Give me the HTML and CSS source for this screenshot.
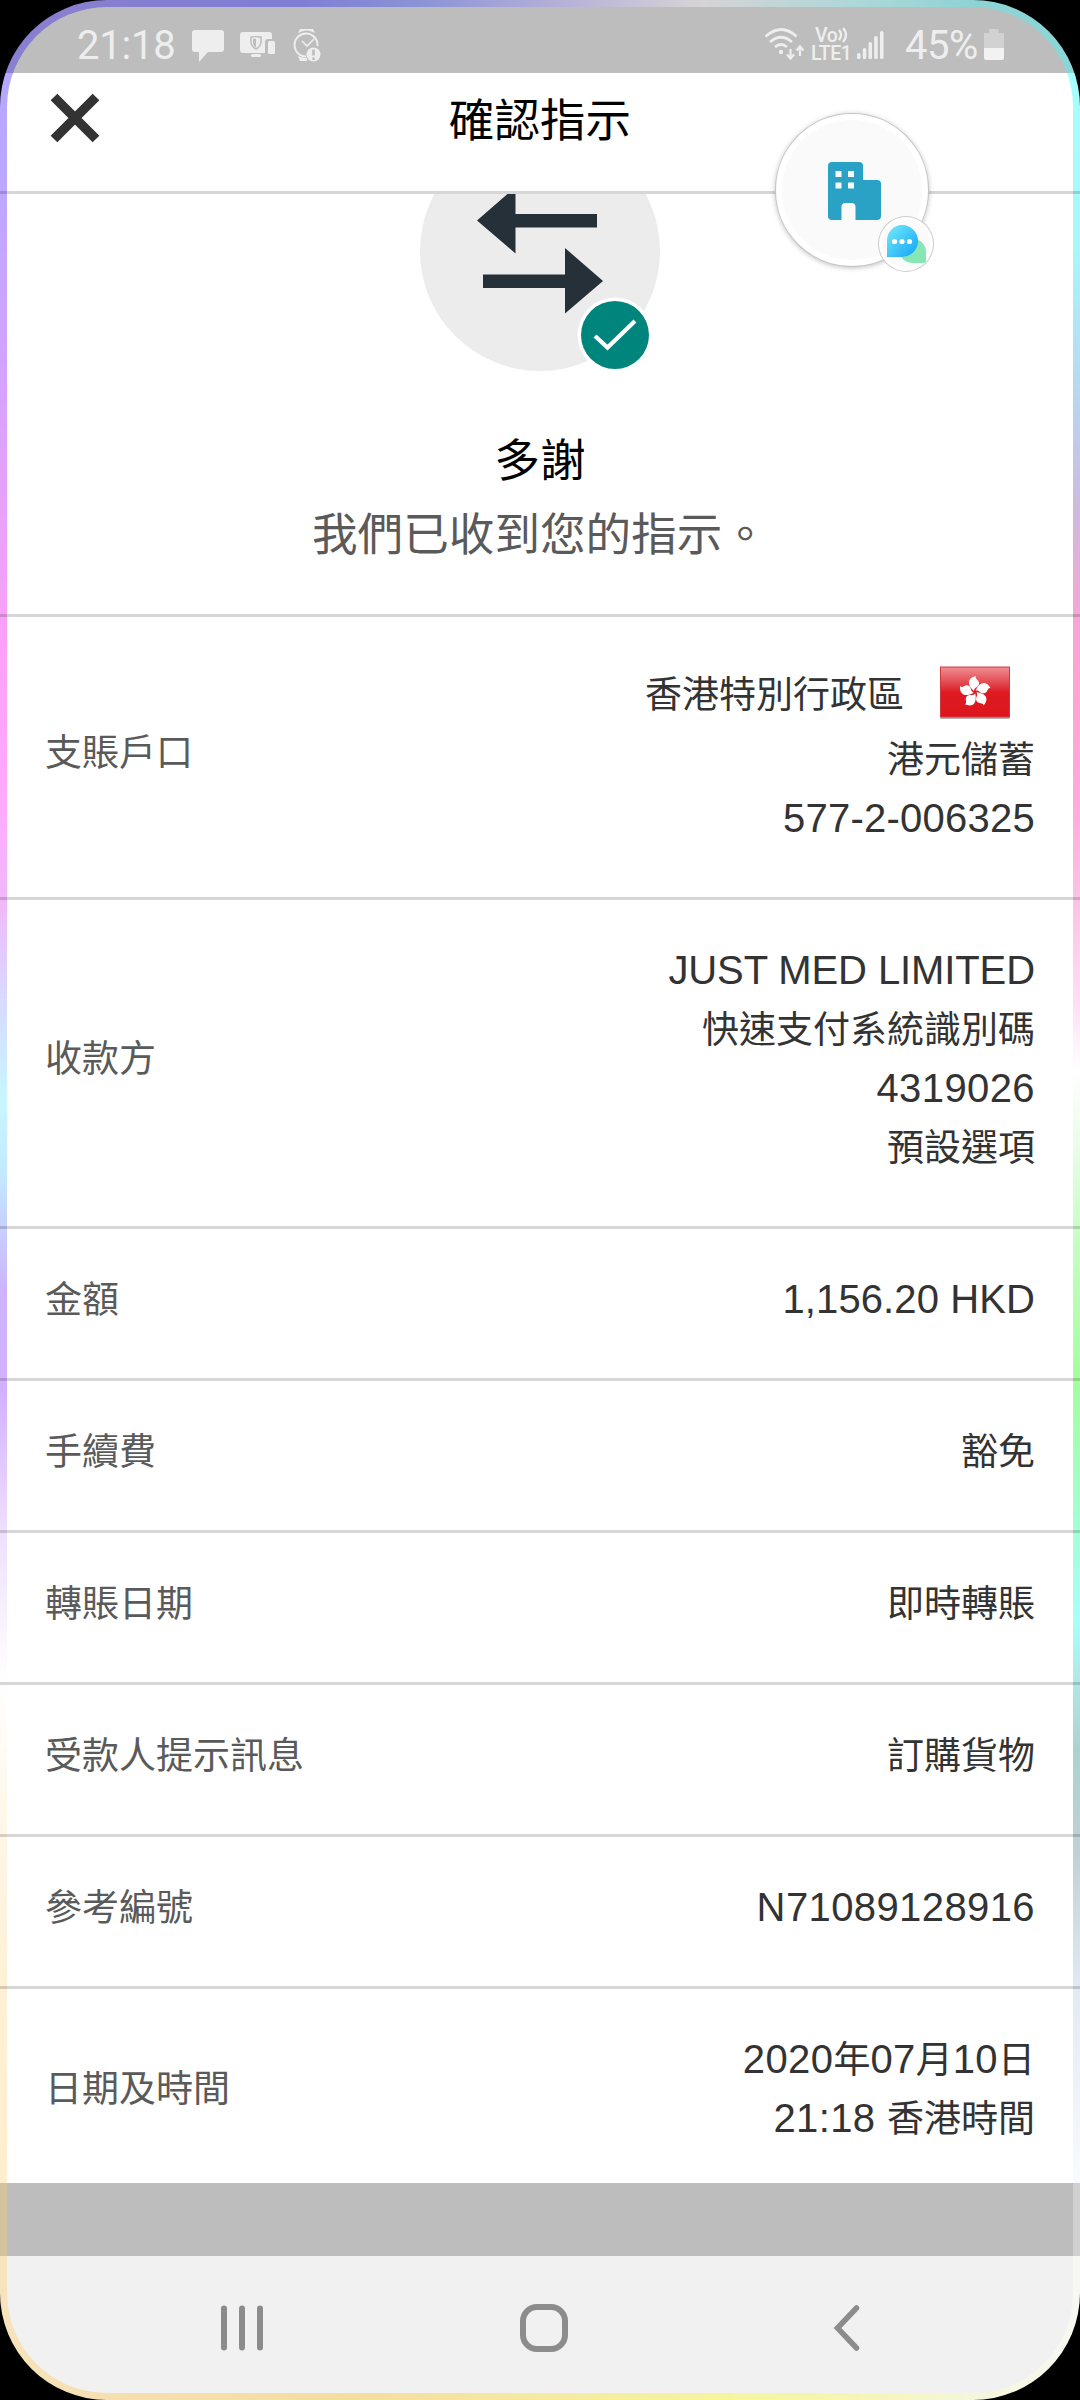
FILE: index.html
```html
<!DOCTYPE html>
<html lang="zh-Hant-HK">
<head>
  <meta charset="UTF-8">
  <meta name="viewport" content="width=device-width, initial-scale=1.0">
  <title>確認指示</title>
  <link rel="stylesheet" href="styles.css">
</head>
<body>
  <div class="phone">
    <div class="screen-bg"></div>

    <div class="screen">
      <div class="status-bar">
        <div class="status-left">
          <span class="clock">21:18</span>
          <svg class="icon-chat" width="34" height="34" viewBox="0 0 34 34">
            <path d="M4 1h26q3 0 3 3v16q0 3-3 3H17L8 33v-10H4q-3 0-3-3V4q0-3 3-3z" fill="#eee"/>
          </svg>
          <svg class="icon-devices" width="36" height="26" viewBox="0 0 36 26">
            <path d="M3 0h26q3 0 3 3v4h-4q-3 0-3 3v11H3q-3 0-3-3V3q0-3 3-3z" fill="#eee"/>
            <rect x="28" y="9" width="7" height="13" rx="1.5" fill="#eee"/>
            <rect x="11" y="22" width="10" height="3" rx="1.5" fill="#eee"/>
            <path d="M11 5q5 0 5-1q0 1 5 1v5q0 4-5 7q-5-3-5-7z" fill="#eee" stroke="#bdbdbd" stroke-width="1.5"/>
            <path d="M16 6.5v9q-3-2-3-5.500V7z" fill="#bdbdbd"/>
          </svg>
          <svg class="icon-watch" width="28" height="34" viewBox="0 0 28 34">
            <path d="M5 5l2-4h13l2 4q-8-5-17 0zM5 28q4 2 9 2v3H7z" fill="#eee"/>
            <path d="M24.500 18A11.500 11.500 0 1 0 13 28.500" fill="none" stroke="#eee" stroke-width="2"/>
            <path d="M9 13l5 5 7-7" fill="none" stroke="#eee" stroke-width="1.600"/>
            <circle cx="20.500" cy="26.500" r="7" fill="#eee"/>
            <path d="M20.500 21.500v6M20.500 29.500v2.500" stroke="#bdbdbd" stroke-width="2.600"/>
          </svg>
        </div>
        <div class="status-right">
          <svg class="icon-wifi" width="42" height="34" viewBox="0 0 42 34" fill="none" stroke="#eee">
            <path d="M1.500 9.500q16-14 31 0M6 15q11-9.500 22 0M11 20q6-5 12 0" stroke-width="2.800"/>
            <circle cx="17" cy="25" r="2.200" fill="#eee" stroke="none"/>
            <path d="M26.500 22v9M23 27.500l3.500 4 3.500-4M36 29v-9M32.500 23.500l3.500-4 3.500 4" stroke-width="2.200"/>
          </svg>
          <div class="lte">
            <span class="vo">Vo<svg width="10" height="17" viewBox="0 0 10 17" fill="none" stroke="#eee" stroke-width="2.4"><path d="M1 3q4 4.500 0 10M5 1q6 6.500 0 14"/></svg></span>
            <span>LTE1</span>
          </div>
          <svg class="icon-signal" width="27" height="30" viewBox="0 0 27 30" fill="#eee">
            <rect x="0" y="23" width="3.500" height="6" rx="1.500"/>
            <rect x="5.800" y="18" width="3.500" height="11" rx="1.500"/>
            <rect x="11.500" y="12" width="3.500" height="17" rx="1.500"/>
            <rect x="17.200" y="6" width="3.500" height="23" rx="1.500"/>
            <rect x="23" y="1" width="3.500" height="28" rx="1.500"/>
          </svg>
          <span class="percent">45%</span>
          <svg class="icon-battery" width="20" height="32" viewBox="0 0 20 32">
            <path d="M5.500 0h9v4H20v15H0V4h5.500z" fill="#d2d2d2"/>
            <path d="M0 19h20v10q0 2-2 2H2q-2 0-2-2z" fill="#f2f2f2"/>
          </svg>
        </div>
      </div>

      <div class="header">
        <svg class="close" width="50" height="50" viewBox="0 0 50 50">
          <path d="M4 4l42 42M46 4L4 46" stroke="#333" stroke-width="9.500"/>
        </svg>
        <h1>確認指示</h1>
      </div>

      <div class="summary">
        <svg class="transfer" width="240" height="178" viewBox="420 194 240 178">
          <circle cx="540" cy="251" r="120" fill="#ececec"/>
          <path d="M477 220.500L515.500 187v27H597v13.500h-81.500V253.500zM603 281l-38-33v26.500h-82v13.500h82V313.500z" fill="#263038"/>
          <circle cx="615" cy="335" r="37.500" fill="#fff"/>
          <circle cx="615" cy="335" r="34" fill="#00857d"/>
          <path d="M595 336l12.500 11.500L635 321" fill="none" stroke="#fff" stroke-width="4.200"/>
        </svg>
        <h2>多謝</h2>
        <p>我們已收到您的指示。</p>
      </div>

      <div class="details">
        <div class="row">
          <div class="label">支賬戶口</div>
          <div class="value">
            <div class="region">香港特別行政區
              <svg class="flag" width="70" height="54" viewBox="0 0 70 54">
                <defs>
                  <linearGradient id="flagRed" x1="0" y1="0" x2="0" y2="1">
                    <stop offset="0" stop-color="#ee9095"/>
                    <stop offset=".42" stop-color="#e03038"/>
                    <stop offset=".5" stop-color="#de1a22"/>
                    <stop offset="1" stop-color="#dc161c"/>
                  </linearGradient>
                  <path id="petal" d="M34 25C27 19 27 12 36 10C34 13 40 14 39 18C38 22 34 21 34 25z"/>
                </defs>
                <rect x="0.500" y="3" width="69" height="50" fill="#000" opacity=".3"/>
                <rect x="0.500" y="1" width="69" height="50" fill="url(#flagRed)" stroke="#cf3a40" stroke-width="1"/>
                <g fill="#fff">
                  <use href="#petal"/>
                  <use href="#petal" transform="rotate(72 35 26)"/>
                  <use href="#petal" transform="rotate(144 35 26)"/>
                  <use href="#petal" transform="rotate(216 35 26)"/>
                  <use href="#petal" transform="rotate(288 35 26)"/>
                </g>
              </svg>
            </div>
            <div>港元儲蓄</div>
            <div><span class="num account">577-2-006325</span></div>
          </div>
        </div>
        <div class="row">
          <div class="label">收款方</div>
          <div class="value">
            <div><span class="num name">JUST MED LIMITED</span></div>
            <div>快速支付系統識別碼</div>
            <div><span class="num">4319026</span></div>
            <div>預設選項</div>
          </div>
        </div>
        <div class="row">
          <div class="label">金額</div>
          <div class="value"><div><span class="num amount">1,156.20 HKD</span></div></div>
        </div>
        <div class="row">
          <div class="label">手續費</div>
          <div class="value"><div>豁免</div></div>
        </div>
        <div class="row">
          <div class="label">轉賬日期</div>
          <div class="value"><div>即時轉賬</div></div>
        </div>
        <div class="row">
          <div class="label">受款人提示訊息</div>
          <div class="value"><div>訂購貨物</div></div>
        </div>
        <div class="row">
          <div class="label">參考編號</div>
          <div class="value"><div><span class="num">N71089128916</span></div></div>
        </div>
        <div class="row last">
          <div class="label">日期及時間</div>
          <div class="value">
            <div><span class="num">2020</span>年<span class="num">07</span>月<span class="num">10</span>日</div>
            <div><span class="num">21:18 </span>香港時間</div>
          </div>
        </div>
      </div>

      <div class="toolbar"></div>

      <div class="nav-bar">
        <svg width="42" height="46" viewBox="0 0 42 46" stroke="#8c8c8c" stroke-width="6" stroke-linecap="round">
          <path d="M3 3.500v39M21 3.500v39M39 3.500v39"/>
        </svg>
        <svg class="home" width="48" height="48" viewBox="0 0 48 48" fill="none" stroke="#8c8c8c" stroke-width="6">
          <rect x="3" y="3" width="42" height="42" rx="14"/>
        </svg>
        <svg width="27" height="46" viewBox="0 0 27 46" fill="none" stroke="#8c8c8c" stroke-width="5.500" stroke-linecap="round">
          <path d="M23.500 3L4.500 23l19 20"/>
        </svg>
      </div>
    </div>

    <!-- floating chat head -->
    <div class="chat-head">
      <svg width="54" height="60" viewBox="0 0 54 60">
        <path d="M4 0h27q4 0 4 4v14h14q4 0 4 4v32q0 4-4 4H27.500V45q0-4-4-4h-6q-4 0-4 4v13H4q-4 0-4-4V4q0-4 4-4z" fill="#29a2c6"/>
        <path d="M7.500 9h6v6h-6zM20 9h6v6h-6zM7.500 20.500h6v6h-6zM20 20.500h6v6h-6z" fill="#fafafa"/>
      </svg>
      <div class="chat-badge">
        <svg width="40" height="40" viewBox="0 0 40 40">
          <defs>
            <linearGradient id="bubble" x1="0" y1="0" x2="1" y2="1">
              <stop offset=".2" stop-color="#62def8"/>
              <stop offset="1" stop-color="#11a2f8"/>
            </linearGradient>
          </defs>
          <path d="M31 14q9 4 9 13v9q0 2-2 2H27q-9 0-12-7z" fill="#87e7b4"/>
          <path d="M16 0a16 16 0 0 1 0 32H1V15A15.500 15.500 0 0 1 16 0z" fill="url(#bubble)"/>
          <g fill="#fff"><circle cx="8.500" cy="16.500" r="2.600"/><circle cx="16" cy="16.500" r="2.600"/><circle cx="23.500" cy="16.500" r="2.600"/></g>
        </svg>
      </div>
    </div>
  </div>
</body>
</html>
```
FILE: styles.css
```css
* {
  box-sizing: border-box;
}
body {
  margin: 0;
  background-color: #000;
  font-family: "Noto Sans CJK TC", "Liberation Sans", sans-serif;
}
svg {
  display: block;
  flex-shrink: 0;
}

/* edge lighting around the screen */
.phone {
  position: relative;
  width: 1080px;
  height: 2400px;
  border-radius: 107px;
  overflow: hidden;
  background:
    linear-gradient(to right, #8a7fd0 0, #7f7ed4 300px, #8b93d6 420px, #b5b0d8 560px, #d6d3d6 700px, #aad8d8 870px, #8fd3d3 970px, #8ad6d6 1080px) 0 0 / 1080px 73px no-repeat,
    linear-gradient(to right, #f6e4bc 0, #f6dfae 130px, #f5dd9f 350px, #f5eaa0 540px, #f5f69c 730px, #f5f6b4 850px, #f6f6dc 980px, #f7f8f3 1080px) 0 2256px / 1080px 144px no-repeat,
    linear-gradient(#b5a8ff 73px, #bda7ff 191px, #d8a2fb 400px, #fca0f8 650px, #ffaafc 800px, #f0b8fa 900px, #d8daff 1000px, #c8f6ff 1100px, #c3eaff 1170px, #cdb4fc 1290px, #d3b0ff 1390px, #eedffc 1530px, #fff 1683px, #fff5e4 1850px, #fff1d6 1980px, #ffedcd 2183px, #d5c39f 2183px, #d5c39f 2256px) 0 0 / 540px 2400px no-repeat,
    linear-gradient(#a6fffe 73px, #a9f6fb 250px, #b8d8ef 390px, #cbbce0 500px, #f0a8d8 600px, #ffa3d4 690px, #ffa9dd 800px, #fdc0e6 897px, #ffddf5 1000px, #fff 1070px, #e8fde6 1150px, #c8ffc6 1230px, #a5ff9d 1380px, #a3ffc9 1500px, #a8fffc 1620px, #b0e8e8 1680px, #acd2d0 1750px, #bfd0d6 1850px, #e2eaf4 1990px, #f8fbff 2183px, #d0d0d0 2183px, #d0d0d0 2256px) 540px 0 / 540px 2400px no-repeat;
}
.screen-bg {
  position: absolute;
  inset: 7px;
  border-radius: 100px;
  background: linear-gradient(#bdbdbd 66px, #fff 66px, #fff 2176px, #bdbdbd 2176px, #bdbdbd 2249px, #f1f1f1 2249px);
}
.screen {
  position: relative;
  height: 2400px;
  display: flex;
  flex-direction: column;
}

/* status bar */
.status-bar {
  height: 73px;
  padding: 0 76px 0 77px;
  display: flex;
  justify-content: space-between;
  color: #eee;
  font-family: Roboto, sans-serif;
}
.status-left, .status-right {
  display: flex;
  align-items: flex-start;
}
.clock, .percent {
  font-size: 40px;
  line-height: 48px;
  margin-top: 22px;
}
.clock {
  width: 114px;
  letter-spacing: -0.2px;
}
.icon-chat {
  margin-top: 29px;
}
.icon-devices {
  margin: 32px 0 0 15px;
}
.icon-watch {
  margin: 28px 0 0 17px;
}
.icon-wifi {
  margin-top: 27px;
}
.lte {
  width: 43px;
  margin: 27px 0 0 5px;
  font-size: 19.500px;
  font-weight: 500;
  line-height: 17.500px;
  white-space: nowrap;
  letter-spacing: -0.4px;
}
.lte span {
  display: block;
}
.lte .vo {
  display: flex;
  gap: 1px;
  padding-left: 4px;
}
.icon-signal {
  margin: 30px 0 0 3px;
}
.percent {
  width: 78px;
  margin-left: 21px;
  letter-spacing: -0.5px;
}
.icon-battery {
  margin: 29px 0 0 1px;
}

/* title bar */
.header {
  height: 121px;
  border-bottom: 3px solid rgba(0, 0, 0, 0.16);
  display: grid;
  grid-template-columns: 150px 1fr 150px;
}
.close {
  margin: 20px 0 0 50px;
}
h1, h2, p {
  margin: 0;
  font-weight: 400;
  font-size: 45.6px;
  line-height: 60px;
  text-align: center;
}
h1 {
  margin-top: 14px;
}

.summary {
  height: 423px;
  border-bottom: 3px solid rgba(0, 0, 0, 0.16);
  display: flex;
  flex-direction: column;
  align-items: center;
}
h2 {
  margin-top: 55px;
}
p {
  margin-top: 14px;
  color: #5a5a5a;
}

/* transfer details */
.details {
  height: 1566px;
}
.row {
  display: flex;
  justify-content: space-between;
  align-items: center;
  padding: 39px 45px 51px;
  border-bottom: 3px solid rgba(0, 0, 0, 0.16);
  font-size: 37px;
  line-height: 59px;
}
.row.last {
  border-bottom: 0;
  padding-bottom: 37px;
}
.label {
  color: #5a5a5a;
  margin-top: -1px;
}
.value {
  color: #333;
  text-align: right;
}
.value div {
  height: 59px;
}
.value .region {
  height: 72px;
  display: flex;
  align-items: center;
  justify-content: flex-end;
  gap: 36px;
  padding-right: 25px;
}
.flag {
  margin-top: 1px;
}
.num {
  font-family: "Liberation Sans", sans-serif;
  font-size: 40px;
  letter-spacing: 0.4px;
  white-space: pre;
}
.num.account {
  letter-spacing: 0.25px;
}
.num.name {
  letter-spacing: -0.1px;
}
.num.amount {
  letter-spacing: 0.1px;
}

.toolbar {
  height: 73px;
}
.nav-bar {
  height: 144px;
  padding: 0 220px 0 221px;
  display: flex;
  align-items: center;
  justify-content: space-between;
}
.home {
  margin-right: 8px;
}

/* chat head floats over the page */
.chat-head {
  position: absolute;
  left: 776px;
  top: 114px;
  width: 152px;
  height: 152px;
  border: 6px solid #fff;
  border-radius: 50%;
  background-color: #fafafa;
  box-shadow: 0 0 0 1px #c6c6c6, 0 1px 5px 1px rgba(0, 0, 0, 0.25);
  padding: 42px 0 0 46px;
}
.chat-badge {
  position: absolute;
  left: 97px;
  top: 97px;
  width: 54px;
  height: 54px;
  border: 3px solid #fff;
  border-radius: 50%;
  background-color: #fafafa;
  box-shadow: 0 0 0 1px #ccc;
  padding: 5px 0 0 4px;
}
```
